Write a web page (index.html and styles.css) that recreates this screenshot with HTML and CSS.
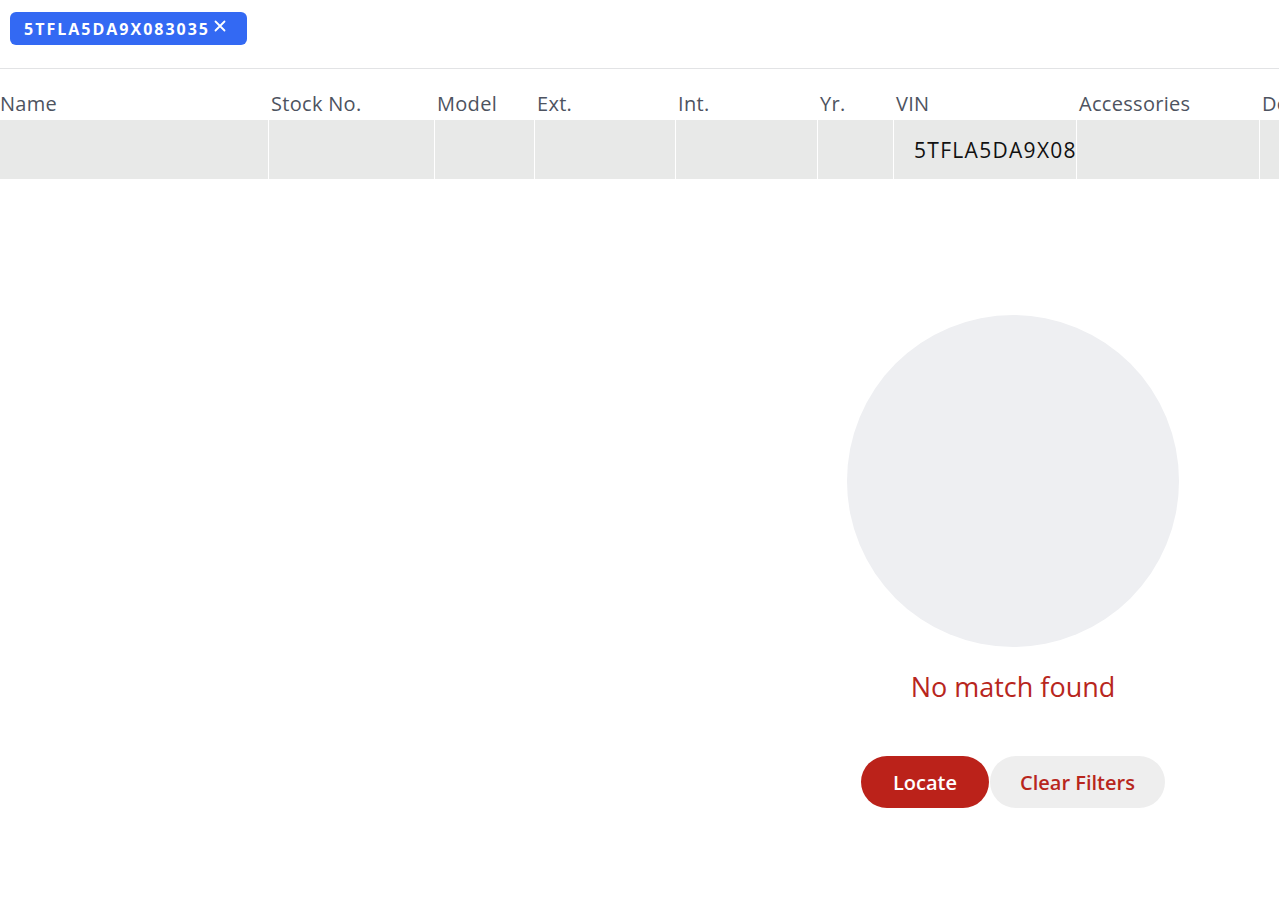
FILE: index.html
```html
<!DOCTYPE html>
<html lang="en">
<head>
    <meta charset="UTF-8">
    <meta name="viewport" content="width=device-width, initial-scale=1.0">
    <title>Inventory Search</title>
    <link rel="stylesheet" href="styles.css">
</head>
<body>
    <div class="filter-bar">
        <span class="chip">5TFLA5DA9X083035<svg class="chip-close" viewBox="0 0 12 12" width="12" height="12"><path d="M1.5 1.5 L10.5 10.5 M10.5 1.5 L1.5 10.5" stroke="#ffffff" stroke-width="1.8" stroke-linecap="round"/></svg></span>
    </div>

    <div class="table-wrap">
        <div class="table">
            <div class="row header-row">
                <div class="cell">Name</div>
                <div class="cell">Stock No.</div>
                <div class="cell">Model</div>
                <div class="cell">Ext.</div>
                <div class="cell">Int.</div>
                <div class="cell">Yr.</div>
                <div class="cell">VIN</div>
                <div class="cell">Accessories</div>
                <div class="cell">Dealer</div>
            </div>
            <div class="row data-row">
                <div class="cell"></div>
                <div class="cell"></div>
                <div class="cell"></div>
                <div class="cell"></div>
                <div class="cell"></div>
                <div class="cell"></div>
                <div class="cell vin">5TFLA5DA9X083035</div>
                <div class="cell"></div>
                <div class="cell"></div>
            </div>
        </div>
    </div>

    <div class="empty-wrap">
        <div class="empty-state">
            <div class="empty-circle"></div>
            <p class="empty-text">No match found</p>
            <div class="actions">
                <button class="btn btn-primary">Locate</button>
                <button class="btn btn-secondary">Clear Filters</button>
            </div>
        </div>
    </div>
</body>
</html>
```

FILE: styles.css
```css
body {
    font-family: "Open Sans", Lato, sans-serif;
    margin: 0;
    padding: 0;
    background-color: #ffffff;
    overflow: hidden;
}

.filter-bar {
    height: 69px;
    padding: 12px 10px 0;
    box-sizing: border-box;
    border-bottom: 1px solid #e2e3e5;
}

.chip {
    display: inline-flex;
    align-items: center;
    width: 237px;
    height: 33px;
    padding: 0 0 0 14px;
    box-sizing: border-box;
    background-color: #3369f3;
    color: white;
    border-radius: 6px;
    font-size: 16px;
    font-weight: 700;
    letter-spacing: 2px;
}

.chip-close {
    margin-left: 4px;
    position: relative;
    top: -3px;
}

.table-wrap {
    overflow: hidden;
    margin-left: -3px;
}

.row {
    display: grid;
    grid-template-columns: 271px 166px 100px 141px 142px 76px 183px 183px 150px;
    width: max-content;
}

.header-row {
    height: 51px;
    align-items: end;
}

.header-row .cell {
    padding: 0 0 3px 3px;
    font-size: 20px;
    line-height: 26px;
    letter-spacing: 0.3px;
    color: #4d5360;
    white-space: nowrap;
}

.data-row {
    height: 59px;
    background-color: #e8e9e8;
}

.data-row .cell {
    border-left: 1px solid #ffffff;
    overflow: hidden;
    white-space: nowrap;
    display: flex;
    align-items: center;
}

.data-row .cell:first-child {
    border-left: none;
}

.data-row .vin {
    padding-left: 20px;
    font-size: 21px;
    color: #111111;
    letter-spacing: 1.3px;
}

.empty-wrap {
    display: flex;
    justify-content: flex-end;
    padding-right: 66px;
    margin-top: 136px;
}

.empty-state {
    width: 400px;
    display: flex;
    flex-direction: column;
    align-items: center;
}

.empty-circle {
    width: 332px;
    height: 332px;
    border-radius: 50%;
    background-color: #eeeff2;
}

.empty-text {
    margin: 22px 0 0;
    font-size: 27px;
    line-height: 36px;
    color: #b8261d;
}

.actions {
    display: flex;
    margin-top: 51px;
}

.btn {
    height: 52px;
    border: none;
    border-radius: 26px;
    font-family: inherit;
    font-size: 20px;
    font-weight: 600;
    cursor: pointer;
}

.btn-primary {
    width: 128px;
    background-color: #bb221a;
    color: white;
}

.btn-secondary {
    width: 175px;
    margin-left: 1px;
    background-color: #eeeeee;
    color: #b8261d;
}
```
